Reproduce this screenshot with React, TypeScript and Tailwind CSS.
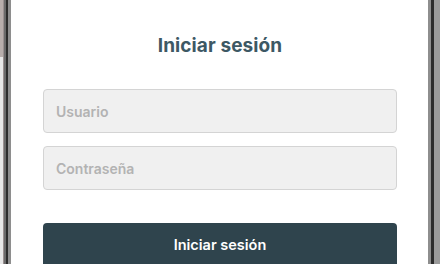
export default function App() {
  return (
    <div className="flex w-[440px] h-[264px] overflow-hidden bg-white" style={{ fontFamily: 'Inter, "Noto Sans", sans-serif' }}>
      {/* side button + left frame */}
      <div className="w-[3px] flex flex-col">
        <div className="h-[57px] bg-[#b8aeac]" />
        <div className="flex-1 bg-[#e8e8e8]" />
      </div>
      <div className="w-[1px] bg-[#9a9090]" />
      <div className="w-[2px] bg-[#6a6a6a]" />
      <div className="w-[2px] bg-[#2c2c2c]" />
      <div className="w-[3px] bg-[#8e8e8e]" />

      {/* screen */}
      <div className="flex-1 flex flex-col px-[32px] pr-[31px]">
        <h1 className="mt-[34px] h-[24px] shrink-0 text-center text-[19px] leading-[24px] font-bold tracking-[0.1px] text-[#3d5864]">
          Iniciar sesión
        </h1>
        <input
          className="mt-[31px] h-[44px] shrink-0 w-full rounded-[4px] border border-[#d4d4d4] bg-[#f0f0f0] px-[12px] text-[14px] font-semibold text-[#444] placeholder:text-[#b3b3b3] outline-none"
          placeholder="Usuario"
        />
        <input
          type="password"
          className="mt-[13px] h-[44px] shrink-0 w-full rounded-[4px] border border-[#d4d4d4] bg-[#f0f0f0] px-[12px] text-[14px] font-semibold text-[#444] placeholder:text-[#b3b3b3] outline-none"
          placeholder="Contraseña"
        />
        <button className="mt-[33px] h-[44px] shrink-0 w-full rounded-t-[4px] bg-[#2f444d] text-[14.5px] font-semibold text-white">
          Iniciar sesión
        </button>
      </div>

      {/* right frame */}
      <div className="w-[3px] bg-[#8e8e8e]" />
      <div className="w-[3px] bg-[#2c2c2c]" />
      <div className="w-[6px] bg-[#9a9a9a]" />
    </div>
  )
}
